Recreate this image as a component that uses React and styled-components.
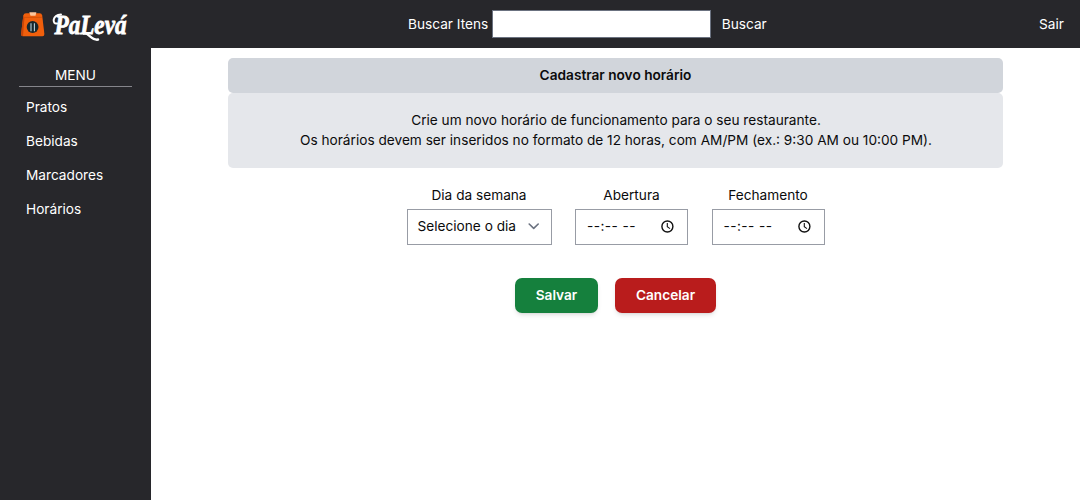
import React from 'react';
import styled, { createGlobalStyle } from 'styled-components';

const GlobalStyle = createGlobalStyle`
  *, *::before, *::after { box-sizing: border-box; }
  body {
    margin: 0;
    background: #fff;
    color: #0b0b0c;
    font: 400 13.66px/20.5px Inter, "Liberation Sans", sans-serif;
  }
  h1, p { margin: 0; font-size: inherit; }
  input, button { font: inherit; }
`;

const Page = styled.div`
  height: 100vh;
  display: flex;
  flex-direction: column;
  overflow: hidden;
`;

const Header = styled.header`
  height: 48px;
  flex: none;
  display: grid;
  grid-template-columns: 408px 1fr auto;
  align-items: center;
  padding-right: 16px;
  background: #27272b;
  color: #fff;
`;

const Brand = styled.a`
  display: flex;
  padding-left: 18px;
`;

const Search = styled.form`
  display: flex;
  align-items: center;
`;

const SearchInput = styled.input`
  width: 219px;
  height: 28px;
  margin: 0 10.5px 0 4px;
  border: 1px solid #6b7280;
  background: #fff;
`;

const PlainButton = styled.button`
  padding: 0;
  border: 0;
  background: none;
  color: inherit;
`;

const Body = styled.div`
  flex: 1;
  display: flex;
`;

const Sidebar = styled.nav`
  width: 151px;
  flex: none;
  padding: 17px 19px;
  background: #27272b;
  color: #fff;
`;

const MenuTitle = styled.div`
  height: 21.5px;
  margin-bottom: 10px;
  border-bottom: 1px solid #85858b;
  text-align: center;
`;

const MenuItem = styled.a`
  display: block;
  margin-bottom: 13.7px;
  padding-left: 7px;
`;

const Main = styled.main`
  flex: 1;
  padding: 10px 77px 0;
`;

const Title = styled.h1`
  height: 35px;
  padding-top: 7px;
  border-radius: 5px;
  background: #d1d5db;
  font-weight: 600;
  text-align: center;
`;

const Intro = styled.p`
  height: 75px;
  padding: 17px 0 0 1px;
  border-radius: 5px;
  background: #e5e7eb;
  line-height: 20px;
  text-align: center;
`;

const Fields = styled.div`
  display: flex;
  justify-content: center;
  gap: 23.5px;
  margin-top: 17px;
`;

const Field = styled.div`
  width: ${({ $width }) => $width}px;
  text-align: center;
`;

const Control = styled.div`
  height: 36px;
  margin-top: 3px;
  padding: 0 ${({ $end }) => $end}px 0 10px;
  display: flex;
  align-items: center;
  justify-content: space-between;
  border: 1px solid #989ca5;
  white-space: pre;
`;

const TimeMask = styled.span`
  padding-left: 1px;
  letter-spacing: 0.45px;
`;

const Actions = styled.div`
  display: flex;
  justify-content: center;
  gap: 17px;
  margin-top: 33.4px;
`;

const ActionButton = styled.button`
  width: ${({ $width }) => $width}px;
  height: 35px;
  padding: 0;
  border: 0;
  border-radius: 7px;
  background: ${({ $color }) => $color};
  color: #fff;
  font-weight: 600;
  box-shadow: 0 3px 5px -1px rgb(0 0 0 / 0.12), 0 2px 3px -2px rgb(0 0 0 / 0.1);
`;

const LogoDrawing = styled.svg`
  display: block;
  overflow: visible;
`;

const Logo = () => (
  <LogoDrawing width="124" height="48" viewBox="18 0 124 48" role="img" aria-label="PaLevá">
    <path d="M23.3 15.5 Q23.8 13.3 26 13.3 H39.7 Q41.8 13.3 42.2 15.5 L44.4 34 Q44.4 36.2 42.5 36.2 H23 Q21 36.2 21.1 34Z" fill="#f05f0c" />
    <path d="M23.3 16 L21.1 34 Q21 36.2 23 36.2 L24.4 18Z" fill="#c94508" />
    <path d="M23.8 17.4 H41.8" stroke="#c94d0a" strokeWidth=".7" />
    <path d="M29.3 12.3 H36.4 L35.5 15.8 H30.5Z" fill="#ffc69b" />
    <circle cx="32.6" cy="27" r="5.9" fill="#17272c" />
    <path d="M31 23.3 V31.3 M34.4 23.3 V31.3" stroke="#b9d2db" strokeWidth="1.1" />
    <text
      x="54.5"
      y="33.5"
      fill="#fff"
      stroke="#fff"
      strokeWidth=".8"
      fontFamily="Liberation Serif, serif"
      fontStyle="italic"
      fontWeight="700"
      fontSize="28"
      textLength="72"
      lengthAdjust="spacingAndGlyphs"
    >
      PaLevá
    </text>
    <g fill="none" stroke="#fff" strokeWidth="2" strokeLinecap="round">
      <path d="M57 23.5 C52 24.5 52 15 61 14.5" />
      <path d="M84 33.5 C88 32 92 41 98 39.5" strokeWidth="2.5" />
    </g>
  </LogoDrawing>
);

const Chevron = () => (
  <svg width="11" height="7" viewBox="0 0 11 7" fill="none" stroke="#6b7280" strokeWidth="1.6" strokeLinecap="round" strokeLinejoin="round">
    <path d="M1.2 1l4.5 4.4L10.2 1" />
  </svg>
);

const Clock = () => (
  <svg width="13" height="13" viewBox="0 0 13 13" fill="none" stroke="#111" strokeWidth="1.4">
    <circle cx="6.4" cy="6.5" r="5.5" />
    <path d="M6.3 3.1v3.7l2.7 1.8" strokeWidth="1.1" />
  </svg>
);

const TimeField = ({ label }) => (
  <Field $width={113}>
    {label}
    <Control $end={13}>
      <TimeMask>--:-- --</TimeMask>
      <Clock />
    </Control>
  </Field>
);

export default function App() {
  return (
    <Page>
      <GlobalStyle />
      <Header>
        <Brand><Logo /></Brand>
        <Search>
          <label htmlFor="search">Buscar Itens</label>
          <SearchInput id="search" />
          <PlainButton type="button">Buscar</PlainButton>
        </Search>
        <PlainButton type="button">Sair</PlainButton>
      </Header>
      <Body>
        <Sidebar>
          <MenuTitle>MENU</MenuTitle>
          {['Pratos', 'Bebidas', 'Marcadores', 'Horários'].map((item) => (
            <MenuItem key={item}>{item}</MenuItem>
          ))}
        </Sidebar>
        <Main>
          <Title>Cadastrar novo horário</Title>
          <Intro>
            Crie um novo horário de funcionamento para o seu restaurante.
            <br />
            Os horários devem ser inseridos no formato de 12 horas, com AM/PM (ex.: 9:30 AM ou 10:00 PM).
          </Intro>
          <Fields>
            <Field $width={145}>
              Dia da semana
              <Control $end={12}>
                Selecione o dia
                <Chevron />
              </Control>
            </Field>
            <TimeField label="Abertura" />
            <TimeField label="Fechamento" />
          </Fields>
          <Actions>
            <ActionButton $width={83} $color="#15803d">Salvar</ActionButton>
            <ActionButton $width={101} $color="#b91c1c">Cancelar</ActionButton>
          </Actions>
        </Main>
      </Body>
    </Page>
  );
}
